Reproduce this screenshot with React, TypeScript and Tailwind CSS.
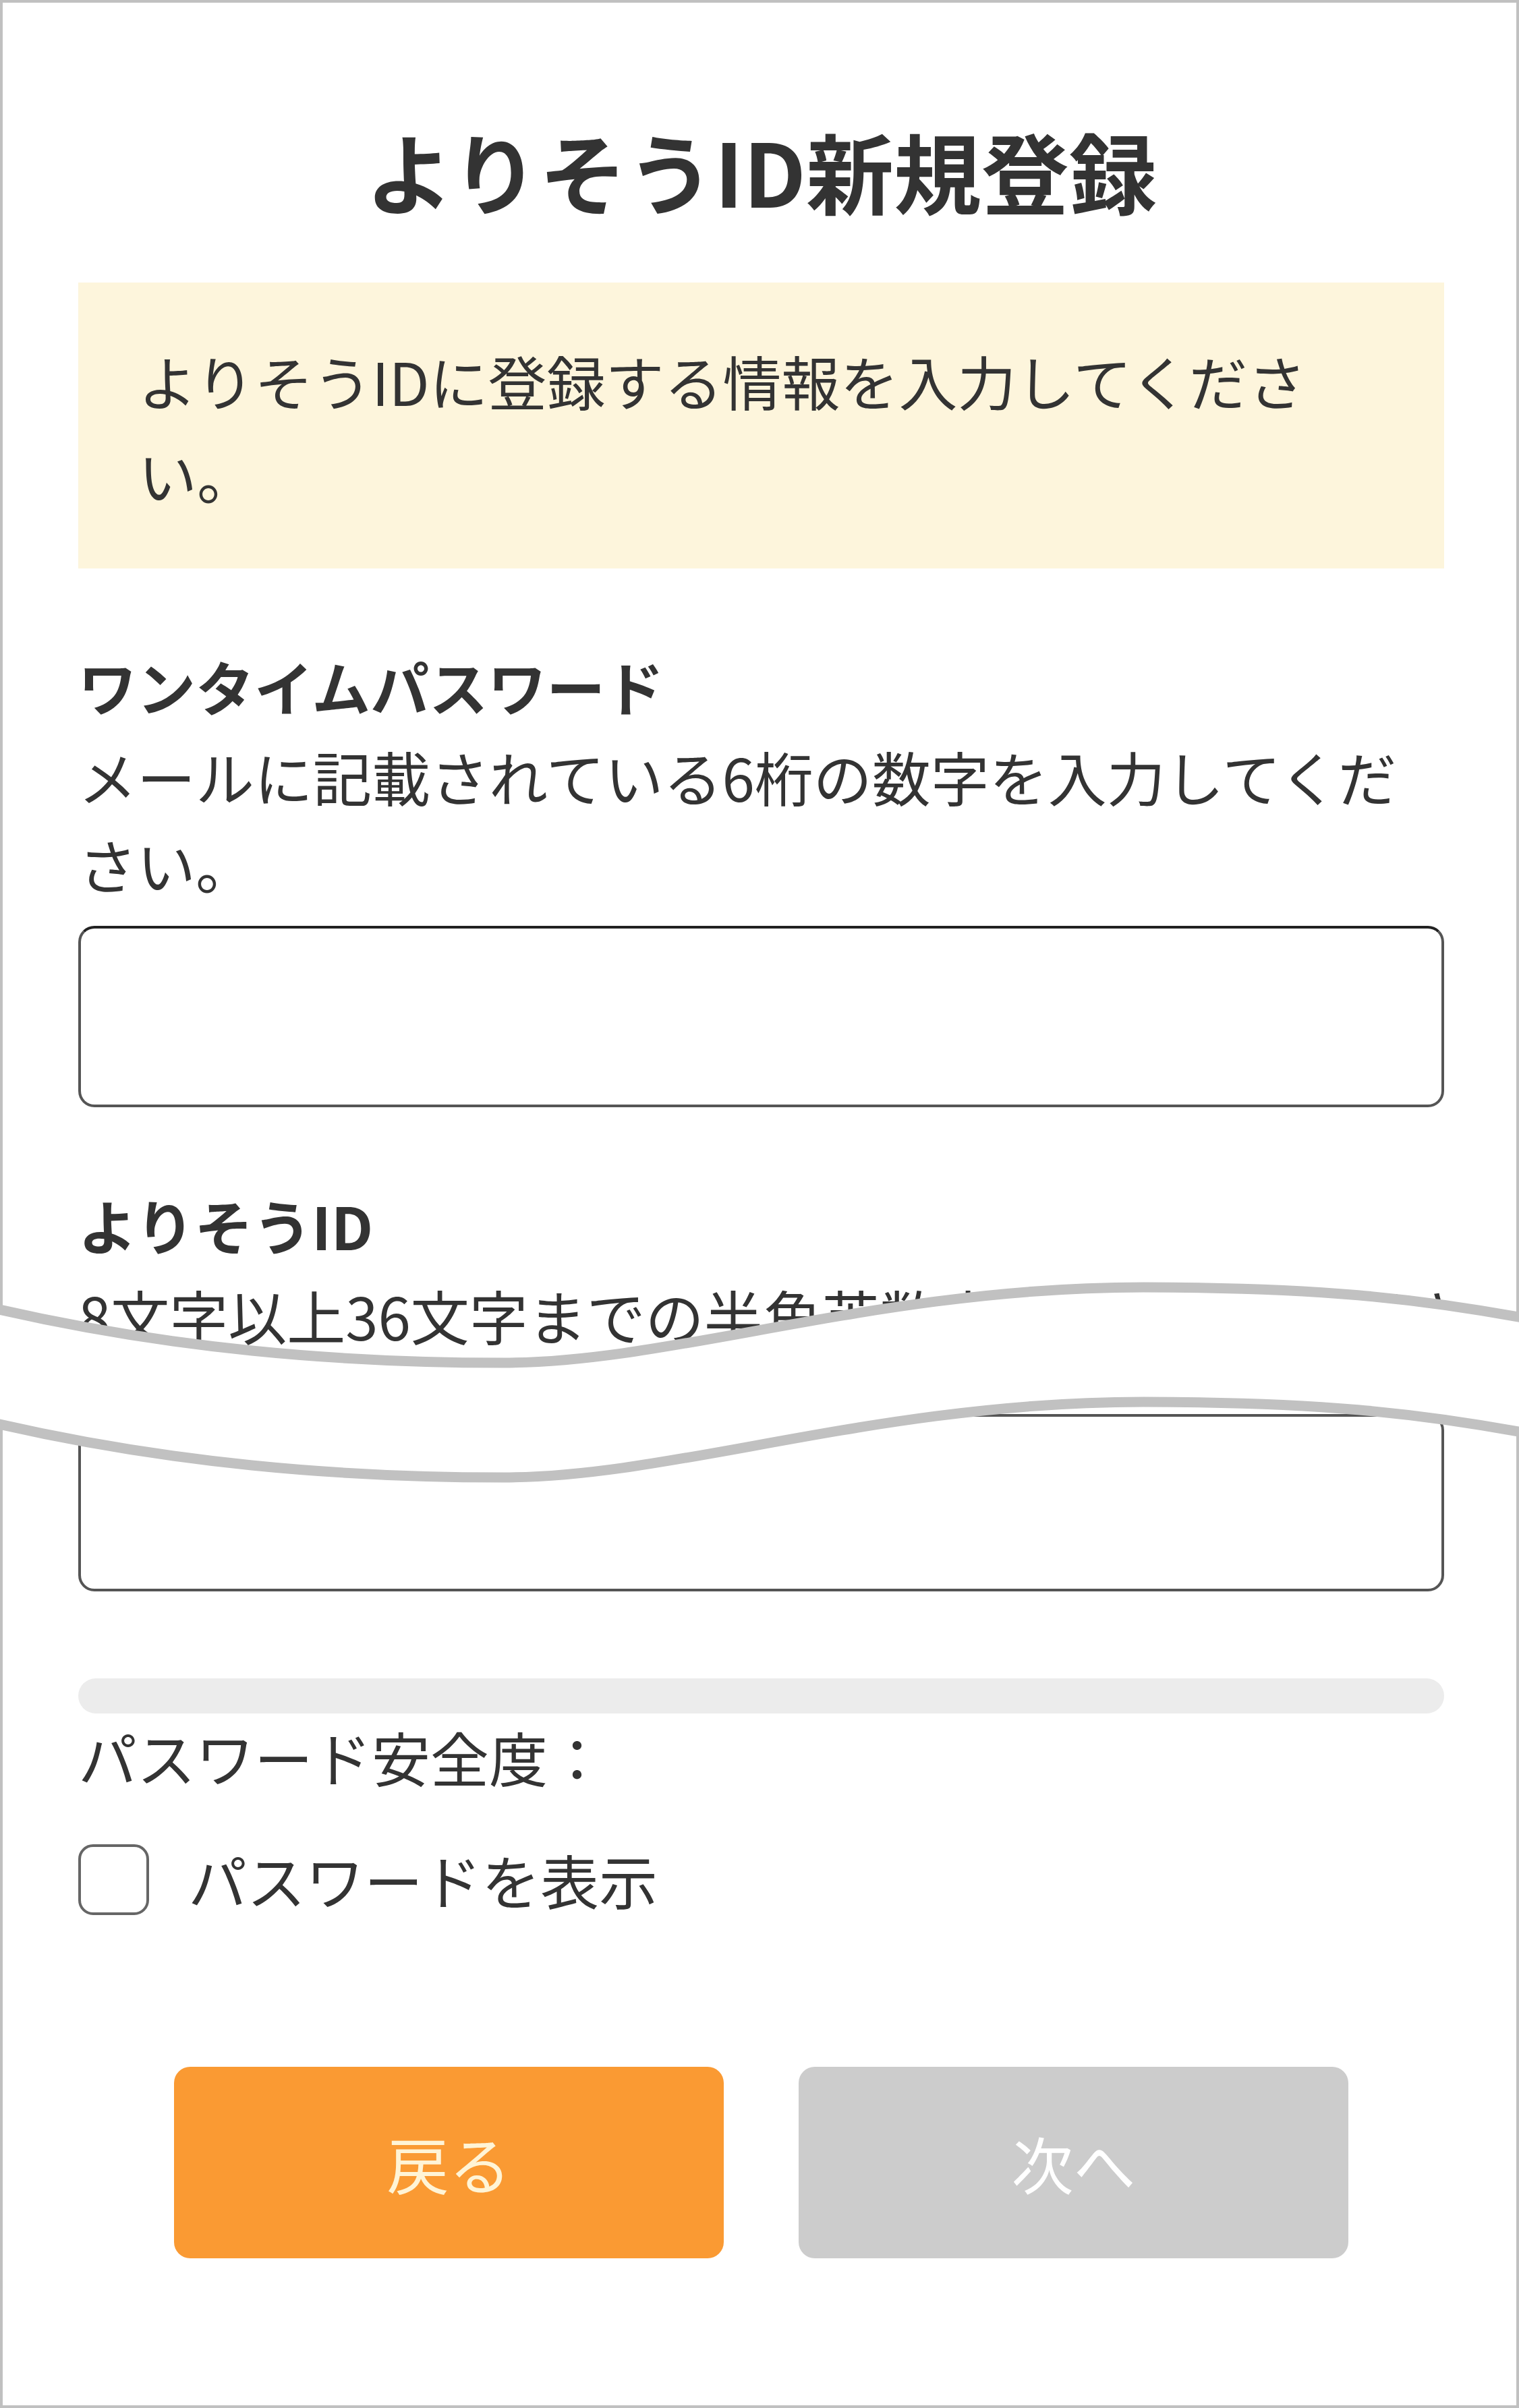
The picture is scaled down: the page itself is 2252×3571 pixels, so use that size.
import React from 'react';

// torn-paper break drawn over the middle of the form
function TornEdge() {
  const top =
    'M -10 1940 C 250 2000, 500 2021, 747 2021 C 1000 2021, 1300 1909, 1695 1909 C 1950 1909, 2100 1925, 2262 1955';
  const bottom =
    'M -10 2110 C 250 2170, 500 2191, 747 2191 C 1000 2191, 1300 2079, 1695 2079 C 1950 2079, 2100 2095, 2262 2125';
  const fill =
    top +
    ' L 2262 2125 C 2100 2095, 1950 2079, 1695 2079 C 1300 2079, 1000 2191, 747 2191 C 500 2191, 250 2170, -10 2110 Z';
  return (
    <svg
      className="absolute left-0 top-[1860px] w-[2252px] h-[360px] pointer-events-none"
      viewBox="0 1860 2252 360"
    >
      <path d={fill} fill="#ffffff" />
      <path d={top} fill="none" stroke="#c1c1c1" strokeWidth="15" />
      <path d={bottom} fill="none" stroke="#c1c1c1" strokeWidth="15" />
    </svg>
  );
}

export default function App() {
  return (
    <div className="relative w-[2252px] h-[3571px] bg-white text-[#333] font-['Noto_Sans_CJK_JP','Noto_Sans',sans-serif]">
      <div className="h-full border-4 border-[#c0c0c0] pl-[112px] pr-[107px] pt-[169px]">
        {/* Title */}
        <h1 className="text-center text-[130px] leading-[156px] font-bold">よりそうID新規登録</h1>

        {/* Notice */}
        <div className="mt-[90px] bg-[#fdf5dc] px-[89px] pt-[76px] pb-[70px] text-[87px] leading-[139px]">
          よりそうIDに登録する情報を入力してください。
        </div>

        {/* One-time password */}
        <div className="mt-[106px] text-[87px] leading-[137px] font-bold">ワンタイムパスワード</div>
        <div className="text-[87px] leading-[130px]">メールに記載されている6桁の数字を入力してください。</div>
        <div className="mt-[27px] h-[269px] rounded-[24px] border-4 border-[#555] border-t-[#222] bg-white" />

        {/* Yorisou ID */}
        <div className="mt-[106px] text-[87px] leading-[137px] font-bold">よりそうID</div>
        <div className="text-[87px] leading-[130px] whitespace-nowrap overflow-hidden">
          8文字以上36文字までの半角英数字で入力してください。
        </div>
        <div className="mt-[82px] h-[263px] rounded-[24px] border-4 border-[#555] bg-white" />

        {/* Strength */}
        <div className="mt-[129px] h-[52px] rounded-full bg-[#ececec]" />
        <div className="-mt-[2px] text-[87px] leading-[132px]">パスワード安全度：</div>

        <div className="mt-[64px] flex items-center gap-[58px]">
          <div className="w-[105px] h-[105px] rounded-[22px] border-4 border-[#666] bg-white" />
          <span className="text-[87px] leading-[105px]">パスワードを表示</span>
        </div>

        {/* Buttons */}
        <div className="mt-[225px] flex justify-center gap-[111px]">
          <button className="w-[815px] h-[284px] rounded-[24px] bg-[#fa9a33] text-[#fff4d6] text-[92px]">
            戻る
          </button>
          <button className="w-[815px] h-[284px] rounded-[24px] bg-[#cccccc] text-white text-[92px]">
            次へ
          </button>
        </div>
      </div>
      <TornEdge />
    </div>
  );
}
